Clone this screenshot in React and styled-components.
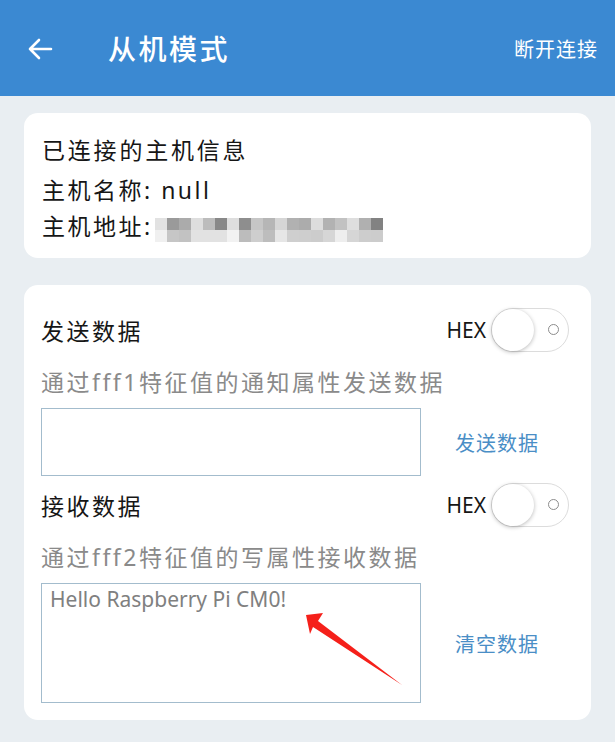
import styled, { createGlobalStyle } from "styled-components"

const GlobalStyle = createGlobalStyle`
  body {
    margin: 0;
    background: #e9eef2;
    font-family: "Noto Sans", "Noto Sans CJK SC", sans-serif;
  }
`

const mosaicRows = [
  ["#e2e2e2", "#9a9a9a", "#ababab", "#dedede", "#bcbcbc", "#888888", "#dedede", "#8e8e8e", "#c6c6c6", "#b6b6b6", "#d6d6d6", "#b1b1b1", "#acacac", "#dddddd", "#b2b2b2", "#c2c2c2", "#dedede", "#b0b0b0", "#828282"],
  ["#f0f0f0", "#c6c6c6", "#c2c2c2", "#e2e2e2", "#e2e2e2", "#e2e2e2", "#f2f2f2", "#bcbcbc", "#cecece", "#bdbdbd", "#e6e6e6", "#cfcfcf", "#cecece", "#cccccc", "#d6d6d6", "#eeeeee", "#d6d6d6", "#cdcdcd", "#cccccc"],
]

const HexSwitch = () => (
  <SwitchWrap>
    <HexLabel>HEX</HexLabel>
    <Track>
      <Thumb />
      <Ring />
    </Track>
  </SwitchWrap>
)

export default function App() {
  return (
    <>
      <GlobalStyle />
      <Header>
        <BackButton aria-label="返回">
          <svg width="26" height="22" viewBox="0 0 26 22" fill="none" stroke="#fff" strokeWidth="2.6" strokeLinecap="round" strokeLinejoin="round">
            <path d="M24 11H3M12 2L3 11l9 9" />
          </svg>
        </BackButton>
        <Title>从机模式</Title>
        <HeaderAction>断开连接</HeaderAction>
      </Header>

      <Main>
        <InfoCard>
          <InfoTitle>已连接的主机信息</InfoTitle>
          <InfoLine>主机名称: null</InfoLine>
          <InfoLine>
            主机地址:
            <Mosaic>
              {mosaicRows.flat().map((c, i) => (
                <MosaicCell key={i} $c={c} />
              ))}
            </Mosaic>
          </InfoLine>
        </InfoCard>

        <DataCard>
          <SectionHeader>
            <SectionTitle>发送数据</SectionTitle>
            <HexSwitch />
          </SectionHeader>
          <Desc>通过fff1特征值的通知属性发送数据</Desc>
          <InputRow>
            <DataBox $h={68} />
            <ActionText>发送数据</ActionText>
          </InputRow>

          <SectionHeader>
            <SectionTitle>接收数据</SectionTitle>
            <HexSwitch />
          </SectionHeader>
          <Desc>通过fff2特征值的写属性接收数据</Desc>
          <InputRow>
            <DataBox $h={120}>
              Hello Raspberry Pi CM0!
              <Arrow width="110" height="80" viewBox="0 0 110 80">
                <polygon points="4,2 21,0 16,8 100,72 11,14 8,21" fill="#f5201a" />
              </Arrow>
            </DataBox>
            <ActionText>清空数据</ActionText>
          </InputRow>
        </DataCard>
      </Main>
    </>
  )
}

const Header = styled.header`
  display: flex;
  align-items: center;
  height: 96px;
  padding: 0 17px 0 27px;
  background: #3b89d2;
  color: #fff;
`

const BackButton = styled.button`
  display: flex;
  background: none;
  border: none;
  padding: 0;
  margin-top: 2px;
`

const Title = styled.h1`
  margin: 0 0 0 55px;
  font-size: 28px;
  font-weight: 500;
  letter-spacing: 2.5px;
`

const HeaderAction = styled.span`
  margin-left: auto;
  font-size: 20px;
  letter-spacing: 1px;
`

const Main = styled.main`
  display: flex;
  flex-direction: column;
  gap: 27px;
  padding: 17px 24px;
`

const Card = styled.section`
  background: #fff;
  border-radius: 14px;
`

const InfoCard = styled(Card)`
  padding: 19px 18px 14px;
  color: #161616;
  font-size: 23px;
`

const InfoTitle = styled.div`
  line-height: 36px;
  margin-bottom: 4px;
  letter-spacing: 2.8px;
`

const InfoLine = styled.div`
  display: flex;
  align-items: center;
  line-height: 36px;
  letter-spacing: 2.5px;
`

const Mosaic = styled.div`
  display: grid;
  grid-template-columns: repeat(19, 12px);
  grid-auto-rows: 12px;
  margin: 8px 0 0 2px;
`

const MosaicCell = styled.span`
  background: ${(p) => p.$c};
`

const DataCard = styled(Card)`
  padding: 23px 22px 17px 17px;
`

const SectionHeader = styled.div`
  display: flex;
  align-items: center;
  justify-content: space-between;
  height: 44px;
  margin-top: 7px;

  &:first-child {
    margin-top: 0;
  }
`

const SectionTitle = styled.h2`
  margin: 0;
  font-size: 23px;
  font-weight: 400;
  color: #161616;
  letter-spacing: 2.5px;
`

const SwitchWrap = styled.div`
  display: flex;
  align-items: center;
  gap: 5px;
`

const HexLabel = styled.span`
  font-size: 21px;
  color: #161616;
`

const Track = styled.div`
  position: relative;
  width: 76px;
  height: 42px;
  border: 1px solid #dcdcdc;
  border-radius: 22px;
  background: #fff;
`

const Thumb = styled.div`
  position: absolute;
  left: 0;
  top: 0;
  width: 42px;
  height: 42px;
  border-radius: 50%;
  background: #fff;
  box-shadow: 0 1px 4px rgba(0, 0, 0, 0.28);
`

const Ring = styled.div`
  position: absolute;
  right: 9px;
  top: 15px;
  width: 9px;
  height: 9px;
  border: 1.5px solid #8c8c8c;
  border-radius: 50%;
`

const Desc = styled.p`
  margin: 15px 0 11px;
  font-size: 23px;
  line-height: 30px;
  color: #8a8a8a;
  letter-spacing: 2.5px;
`

const InputRow = styled.div`
  display: flex;
  align-items: center;
  gap: 34px;
`

const DataBox = styled.div`
  position: relative;
  box-sizing: border-box;
  width: 380px;
  height: ${(p) => p.$h}px;
  padding: 2px 8px;
  border: 1px solid #a3bccd;
  font-size: 21px;
  line-height: 26px;
  color: #808080;
`

const Arrow = styled.svg`
  position: absolute;
  left: 260px;
  top: 29px;
`

const ActionText = styled.span`
  font-size: 20px;
  color: #4a8ec6;
  letter-spacing: 1px;
`
